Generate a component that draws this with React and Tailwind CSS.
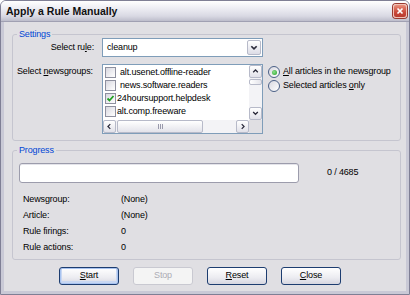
import React from "react";

function Chev({ dir, size = 9, stroke = "#2b2b3b", sw = 1.8 }) {
  const pts = {
    down: "1.5,2.5 4.5,5.5 7.5,2.5",
    up: "1.5,5.5 4.5,2.5 7.5,5.5",
    left: "5.5,1.5 2.5,4.5 5.5,7.5",
    right: "3.5,1.5 6.5,4.5 3.5,7.5",
  }[dir];
  return (
    <svg width={size} height={size} viewBox="0 0 9 9">
      <polyline points={pts} fill="none" stroke={stroke} strokeWidth={sw} />
    </svg>
  );
}

function SBtn({ dir }) {
  return (
    <div className="w-[13px] h-[13px] shrink-0 flex items-center justify-center rounded-[2px] border border-[#b7bac9] bg-[linear-gradient(to_bottom,#ffffff,#e1e1e9)]">
      <Chev dir={dir} size={7} sw={1.6} />
    </div>
  );
}

function Check({ checked }) {
  return (
    <div className="w-[11px] h-[11px] shrink-0 border border-[#8e909f] bg-[linear-gradient(135deg,#d8d8e0,#ffffff)] flex items-center justify-center">
      {checked && (
        <svg width="9" height="9" viewBox="0 0 9 9">
          <polyline points="1.5,4.5 3.5,6.5 7.5,2" fill="none" stroke="#21a121" strokeWidth="1.8" />
        </svg>
      )}
    </div>
  );
}

function Radio({ checked }) {
  return (
    <div className="w-[12px] h-[12px] shrink-0 rounded-full border border-[#4a5f86] bg-[linear-gradient(135deg,#d8d8e0,#ffffff)] flex items-center justify-center">
      {checked && (
        <div className="w-[5px] h-[5px] rounded-full bg-[radial-gradient(circle_at_40%_40%,#8fe08f,#21a121)]" />
      )}
    </div>
  );
}

function Btn({ children, kind }) {
  if (kind === "disabled") {
    return (
      <div className="w-[60px] h-[18px] rounded-[3px] border border-[#c9c9d1] bg-[#f4f4f4] text-[#acacb4] flex items-center justify-center">
        {children}
      </div>
    );
  }
  if (kind === "default") {
    return (
      <div className="w-[60px] h-[18px] rounded-[3px] border border-[#1d3d70] bg-[linear-gradient(to_bottom,#ffffff,#ececf1_60%,#d6d6e0)] shadow-[inset_0_0_0_1px_#a8c3f0,inset_0_-1px_0_2px_#c8d7f2] flex items-center justify-center">
        {children}
      </div>
    );
  }
  return (
    <div className="w-[60px] h-[18px] rounded-[3px] border border-[#1d3d70] bg-[linear-gradient(to_bottom,#ffffff,#ececf1_60%,#d6d6e0)] flex items-center justify-center">
      {children}
    </div>
  );
}

const U = ({ children }) => <span className="underline underline-offset-[1px]">{children}</span>;

export default function App() {
  return (
    <div className="w-[410px] h-[295px] flex flex-col overflow-hidden border border-[#7f7f95] rounded-t-[6px] bg-[#e0dfe3] font-['Liberation_Sans',Arial,sans-serif] text-[9px] tracking-[-0.15px] text-black">
      {/* Title bar */}
      <div className="h-[21px] shrink-0 flex items-center justify-between pl-[5px] pr-[2px] bg-[linear-gradient(to_bottom,#ffffff_0%,#eeeef4_35%,#d9d9e3_75%,#bdbdcb_100%)] border-b border-[#a0a0b2]">
        <span className="font-bold text-[10.5px] tracking-normal text-[#101010] leading-none">Apply a Rule Manually</span>
        <div className="w-[14px] h-[14px] rounded-[3px] border border-[#f2c0b4] bg-[linear-gradient(to_bottom,#e9907c,#c9483a_60%,#b93a2e)] flex items-center justify-center shadow-[0_0_0_1px_#9a3a30]">
          <svg width="8" height="8" viewBox="0 0 8 8">
            <path d="M1.5 1.5 L6.5 6.5 M6.5 1.5 L1.5 6.5" stroke="#ffffff" strokeWidth="1.7" />
          </svg>
        </div>
      </div>

      {/* Body */}
      <div className="flex-1 flex flex-col border-x-[3px] border-b-[3px] border-[#c9c9d6] bg-[#e0dfe3] pt-[8px]">
        {/* Settings */}
        <fieldset className="border border-[#c5c5cf] rounded-[3px] ml-[8px] mr-[5px] pl-[4px] pb-[6px] min-w-0">
          <legend className="px-[2px] text-[#0046d5] leading-[8px] h-[8px]">Settings</legend>
          <div className="flex items-center">
            <div className="w-[77px] text-right whitespace-nowrap">Select ru<U>l</U>e:</div>
            <div className="ml-[8px] w-[161px] h-[19px] border border-[#7f9db9] bg-white flex items-center justify-between pl-[4px] pr-[1px]">
              <span>cleanup</span>
              <div className="w-[14px] h-[15px] rounded-[2px] border border-[#b7bac9] bg-[linear-gradient(to_bottom,#ffffff,#dcdce6)] flex items-center justify-center">
                <Chev dir="down" size={8} sw={1.9} />
              </div>
            </div>
          </div>
          <div className="flex items-start mt-[7px]">
            <div className="w-[77px] pt-[1px] leading-[12px] whitespace-nowrap">Select <U>n</U>ewsgroups:</div>
            <div className="ml-[8px] w-[161px] h-[70px] border border-[#7f9db9] bg-white flex flex-col">
              <div className="flex flex-1 min-h-0">
                <div className="flex-1 pt-[1px] pl-[2px] flex flex-col">
                  <div className="h-[13px] flex items-center"><Check /><span className="ml-[4px]">alt.usenet.offline-reader</span></div>
                  <div className="h-[13px] flex items-center"><Check /><span className="ml-[4px]">news.software.readers</span></div>
                  <div className="h-[13px] flex items-center"><Check checked /><span className="ml-[1px]">24hoursupport.helpdesk</span></div>
                  <div className="h-[13px] flex items-center"><Check /><span className="ml-[1px]">alt.comp.freeware</span></div>
                </div>
                <div className="w-[13px] flex flex-col bg-[#f3f3f6]">
                  <SBtn dir="up" />
                  <div className="mt-[1px] h-[6px] rounded-[2px] border border-[#b7bac9] bg-[linear-gradient(to_right,#ffffff,#e3e3ea)]" />
                  <div className="flex-1" />
                  <SBtn dir="down" />
                </div>
              </div>
              <div className="h-[13px] flex bg-[#f3f3f6]">
                <SBtn dir="left" />
                <div className="ml-[1px] w-[86px] rounded-[2px] border border-[#b7bac9] bg-[linear-gradient(to_bottom,#ffffff,#e3e3ea)] flex items-center justify-center gap-[1px]">
                  <div className="w-[1px] h-[5px] bg-[#9a9aac]" />
                  <div className="w-[1px] h-[5px] bg-[#9a9aac]" />
                  <div className="w-[1px] h-[5px] bg-[#9a9aac]" />
                </div>
                <div className="flex-1" />
                <SBtn dir="right" />
                <div className="w-[13px] bg-[#e0dfe3]" />
              </div>
            </div>
            <div className="ml-[5px] pt-[1px] flex flex-col">
              <div className="h-[14px] flex items-center gap-[3px]"><Radio checked /><span><U>A</U>ll articles in the newsgroup</span></div>
              <div className="h-[14px] flex items-center gap-[3px]"><Radio /><span>Selected articles <U>o</U>nly</span></div>
            </div>
          </div>
        </fieldset>

        {/* Progress */}
        <fieldset className="border border-[#c5c5cf] rounded-[3px] ml-[8px] mr-[5px] mt-[5px] pl-[4px] pb-[4px] min-w-0">
          <legend className="px-[2px] text-[#0046d5] leading-[8px] h-[8px]">Progress</legend>
          <div className="flex items-center mt-[9px] ml-[2px]">
            <div className="w-[280px] h-[20px] rounded-[3px] border border-[#9c9cac] bg-white shadow-[inset_0_1px_0_#e4e4ea]" />
            <span className="ml-[28px]">0 / 4685</span>
          </div>
          <div className="mt-[8px] ml-[6px] grid grid-cols-[98px_1fr] leading-[16px]">
            <span>Newsgroup:</span><span>(None)</span>
            <span>Article:</span><span>(None)</span>
            <span>Rule firings:</span><span>0</span>
            <span>Rule actions:</span><span>0</span>
          </div>
        </fieldset>

        {/* Buttons */}
        <div className="flex gap-[14px] mt-[7px] pl-[55px]">
          <Btn kind="default"><span><U>S</U>tart</span></Btn>
          <Btn kind="disabled"><span>Stop</span></Btn>
          <Btn><span><U>R</U>eset</span></Btn>
          <Btn><span><U>C</U>lose</span></Btn>
        </div>
      </div>
    </div>
  );
}
